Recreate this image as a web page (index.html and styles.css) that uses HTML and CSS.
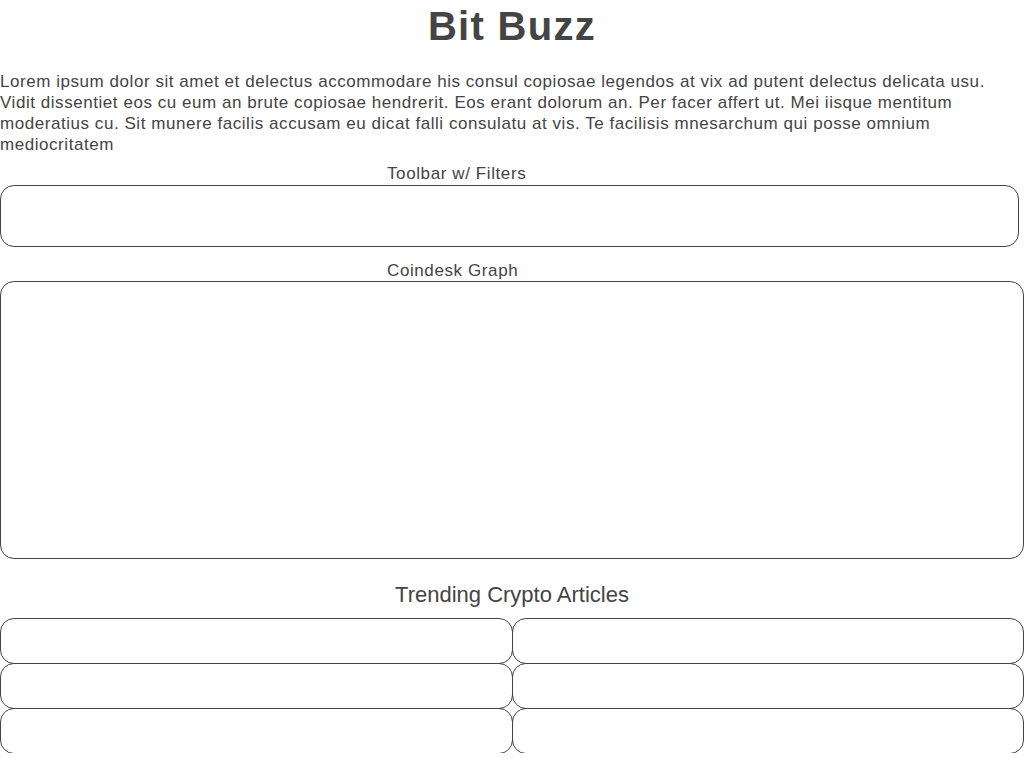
FILE: index.html
```html
<!DOCTYPE html>
<html lang="en">
<head>
<meta charset="utf-8">
<title>Bit Buzz</title>
<link rel="stylesheet" href="styles.css">
</head>
<body>
<h1 class="title">Bit Buzz</h1>
<p class="intro">Lorem ipsum dolor sit amet et delectus accommodare his consul copiosae legendos at vix ad putent delectus delicata usu. Vidit dissentiet eos cu eum an brute copiosae hendrerit. Eos erant dolorum an. Per facer affert ut. Mei iisque mentitum moderatius cu. Sit munere facilis accusam eu dicat falli consulatu at vis. Te facilisis mnesarchum qui posse omnium mediocritatem</p>
<section class="toolbar-section">
  <div class="label toolbar-label">Toolbar w/ Filters</div>
  <div class="box toolbar"></div>
</section>
<section class="graph-section">
  <div class="label graph-label">Coindesk Graph</div>
  <div class="box graph"></div>
</section>
<section class="articles-section">
  <h2 class="articles-title">Trending Crypto Articles</h2>
  <div class="articles">
    <div class="box article"></div>
    <div class="box article"></div>
    <div class="box article"></div>
    <div class="box article"></div>
    <div class="box article"></div>
    <div class="box article"></div>
  </div>
</section>
</body>
</html>
```
FILE: styles.css
```css
html, body {
  margin: 0;
  padding: 0;
  background: #fff;
}
body {
  font-family: "Liberation Sans", Arial, sans-serif;
  color: #444;
}
.title {
  margin: 3px 0 0;
  font-size: 40px;
  line-height: 46px;
  font-weight: bold;
  letter-spacing: 1.3px;
  text-align: center;
}
.intro {
  margin: 22px 0 0;
  font-size: 17px;
  line-height: 21px;
  letter-spacing: 0.55px;
}
.box {
  box-sizing: border-box;
  border: 1px solid #444;
  border-radius: 14px;
}
.label {
  font-size: 17px;
  line-height: 20px;
  letter-spacing: 0.6px;
}
.toolbar-label {
  margin-top: 9px;
  margin-bottom: 1px;
  padding-left: 387px;
}
.toolbar {
  width: 1019px;
  height: 62px;
}
.graph-label {
  margin-top: 14px;
  padding-left: 387px;
}
.graph {
  width: 1024px;
  height: 278px;
}
.articles-title {
  margin: 23px 0 11px;
  font-size: 22px;
  line-height: 25px;
  font-weight: normal;
  text-align: center;
}
.articles {
  display: grid;
  grid-template-columns: 512px 512px;
  grid-auto-rows: 45px;
}
.article {
  width: 513px;
  height: 46px;
}
.article:nth-child(even) {
  width: 512px;
}
```
